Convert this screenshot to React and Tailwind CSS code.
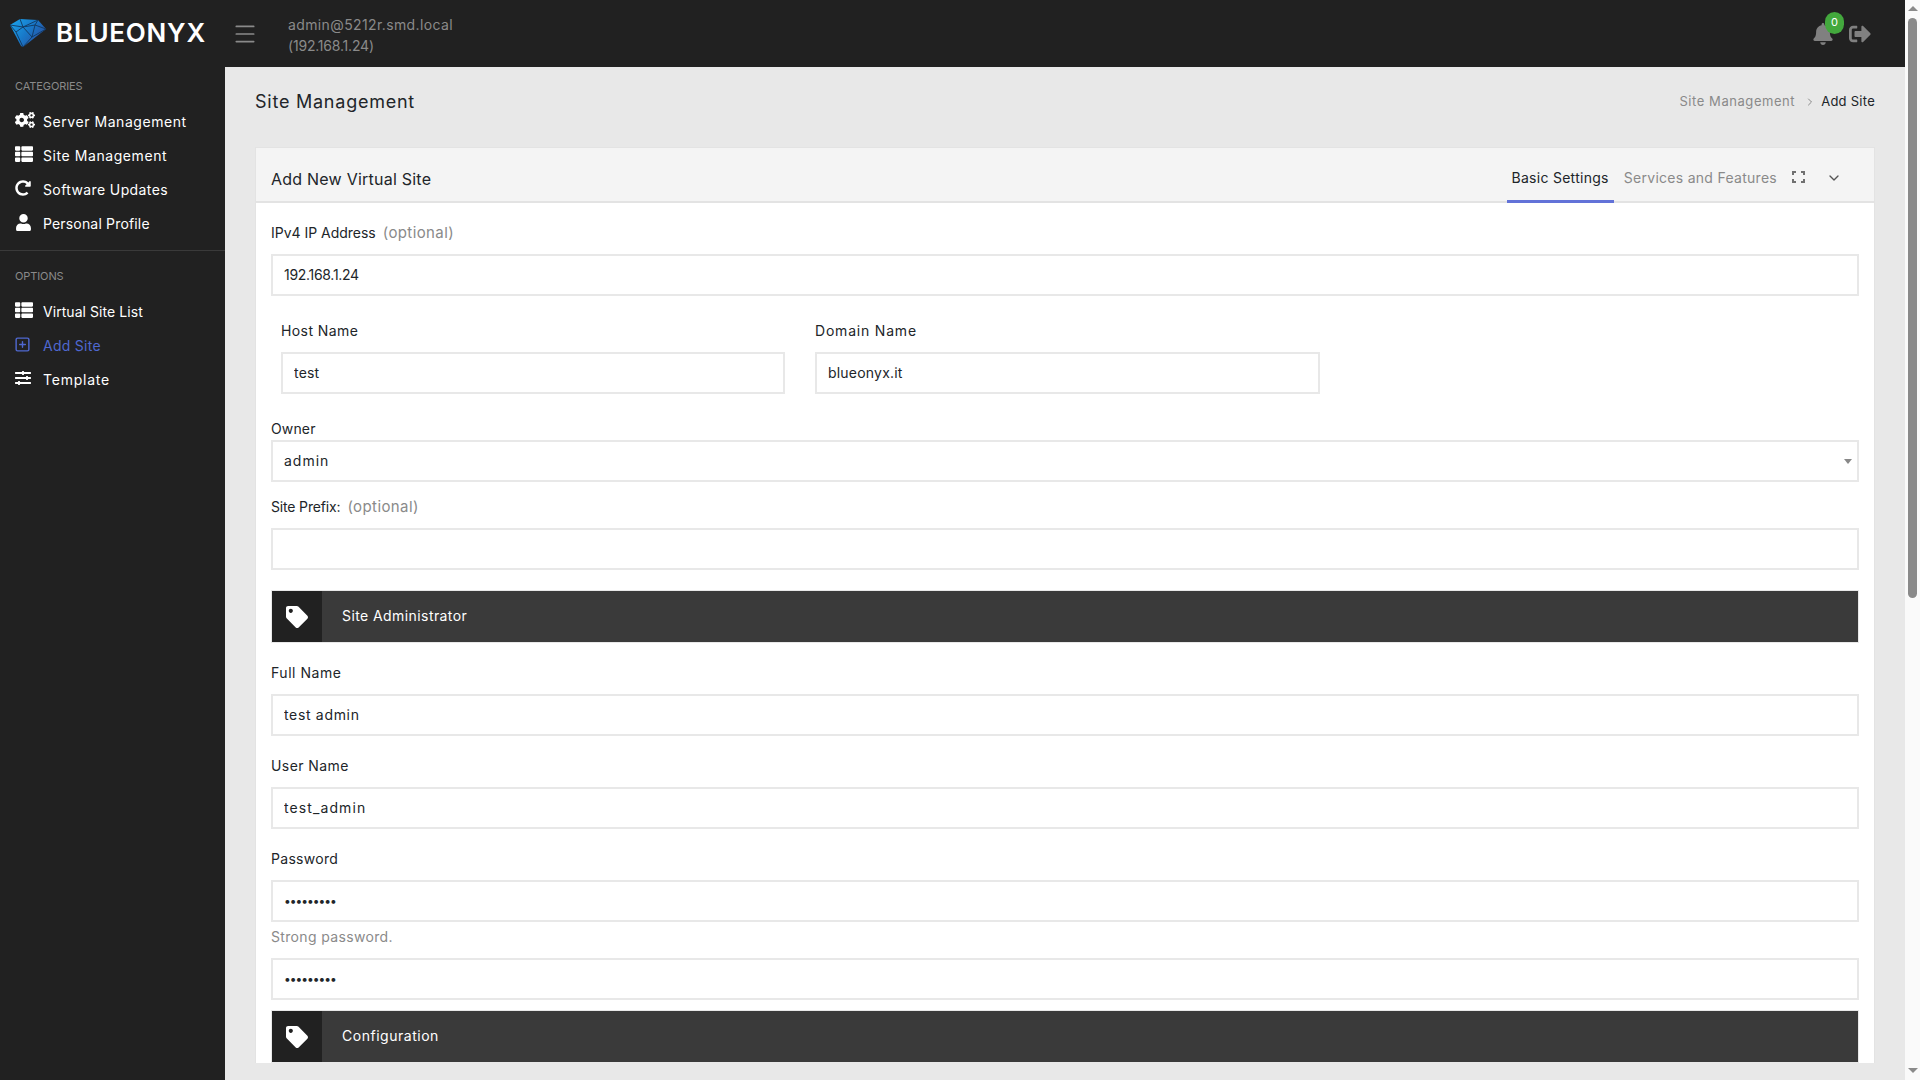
import { Menu, ChevronDown, ChevronRight } from 'lucide-react';
import { FaCogs, FaThList, FaRedoAlt, FaUser, FaSlidersH, FaTag, FaBell, FaSignOutAlt } from 'react-icons/fa';
import { FiPlusSquare } from 'react-icons/fi';

const font = { fontFamily: 'Inter, "Liberation Sans", sans-serif' };

const Diamond = () => (
  <svg width="38" height="30" viewBox="0 0 38 30">
    <defs>
      <linearGradient id="gem" x1="0" y1="0" x2="1" y2="0.6">
        <stop offset="0" stopColor="#1ba8ee" />
        <stop offset="0.55" stopColor="#1878c8" />
        <stop offset="1" stopColor="#2a4fa0" />
      </linearGradient>
    </defs>
    <path d="M1 7 L11 1 L29 2 L37 11 L14 29 L12 28 Z" fill="url(#gem)" />
    <path d="M1 7 L14 9 L11 1 M14 9 L29 2 M14 9 L23 19 L14 29 L7 14 L1 7 M14 9 L7 14 M23 19 L37 11 L26 7 L14 9 M26 7 L29 2 M26 7 L23 19" fill="none" stroke="#12385f" strokeWidth="0.9" />
  </svg>
);

const NavItem = ({ icon: Icon, label, active, size = 18, className = '' }) => (
  <div className={`h-[34px] pl-[15px] pb-[2px] flex items-center text-[14px] ${className} ${active ? 'text-[#4f68d0]' : 'text-white'}`}>
    <span className="w-[28px] shrink-0 -mt-[2px]">
      <Icon size={size} className={active ? '-ml-[1px]' : ''} />
    </span>
    {label}
  </div>
);

const Label = ({ children, hint, className = '' }) => (
  <div className={`text-[14px] leading-[20px] text-[#212529] ${className}`}>
    {children}
    {hint && <span className="text-[15px] tracking-[0.4px] text-[#8a8a8a] ml-[7px]">{hint}</span>}
  </div>
);

const Field = ({ value = '', type = 'text', className = '' }) => (
  <input
    type={type}
    readOnly
    value={value}
    className={`block w-full h-[42px] px-[11px] pb-[2px] border-2 border-[#e8e8e8] bg-white text-[#212529] outline-none ${type === 'password' ? 'text-[12px] tracking-[-1px]' : 'text-[14px]'} ${className}`}
    style={font}
  />
);

const SectionBar = ({ children, className = '' }) => (
  <div className={`h-[53px] flex items-center bg-[#3a3a3a] border border-[#e8e8e8] text-white text-[14px] ${className}`}>
    <div className="w-[50px] h-full bg-[#212121] flex items-center justify-center shrink-0">
      <FaTag size={22} />
    </div>
    <span className="ml-5 pb-[3px]">{children}</span>
  </div>
);

const App = () => {
  return (
    <div className="h-screen flex overflow-hidden bg-[#fafafa]" style={font}>
      <div className="flex-1 min-w-0 flex flex-col">
        {/* Top bar */}
        <header className="h-[67px] shrink-0 bg-[#212121] flex items-center">
          <div className="w-[225px] shrink-0 flex items-center pl-[9px] -mt-[1px]">
            <Diamond />
            <span className="ml-[9px] text-white text-[26px] font-semibold tracking-[0.03em] leading-none">BLUEONYX</span>
          </div>
          <Menu size={26} strokeWidth={1.6} className="ml-[7px] text-[#8a8a8a]" />
          <div className="ml-[30px] pt-[3px] text-[14px] leading-[21px] text-[#8a8a8a]">
            <div className="tracking-[0.38px]">admin@5212r.smd.local</div>
            <div className="tracking-[-0.2px]">(192.168.1.24)</div>
          </div>
          <div className="ml-auto flex items-center pr-[34px] text-[#808080]">
            <div className="relative">
              <FaBell size={22} />
              <span className="absolute -top-[11px] left-[13px] w-[19px] h-[22px] rounded-full bg-[#43a83d] text-white text-[11px] flex items-center justify-center">0</span>
            </div>
            <FaSignOutAlt size={22} className="ml-[15px]" />
          </div>
        </header>

        <div className="flex-1 min-h-0 flex">
          {/* Sidebar */}
          <aside className="w-[225px] shrink-0 bg-[#212121]">
            <div className="pt-[11px] pb-[9px] border-b border-[#3a3a3a]">
              <div className="pl-[15px] text-[11px] leading-[16px] tracking-[-0.1px] text-[#8a8a8a] mb-[11px]">CATEGORIES</div>
              <NavItem icon={FaCogs} label="Server Management" size={20} className="tracking-[0.55px]" />
              <NavItem icon={FaThList} label="Site Management" className="tracking-[0.57px]" />
              <NavItem icon={FaRedoAlt} label="Software Updates" size={16} className="tracking-[0.39px]" />
              <NavItem icon={FaUser} label="Personal Profile" size={17} className="tracking-[0.17px]" />
            </div>
            <div className="pt-[17px]">
              <div className="pl-[15px] text-[11px] leading-[16px] tracking-[-0.1px] text-[#8a8a8a] mb-[11px]">OPTIONS</div>
              <NavItem icon={FaThList} label="Virtual Site List" className="tracking-[0.06px]" />
              <NavItem icon={FiPlusSquare} label="Add Site" active size={17} className="tracking-[0.28px]" />
              <NavItem icon={FaSlidersH} label="Template" size={16} className="tracking-[0.78px]" />
            </div>
          </aside>

          {/* Main */}
          <main className="flex-1 min-w-0 bg-[#e8e8e8] px-[30px] overflow-hidden">
            <div className="h-[80px] flex items-center justify-between pb-[11px]">
              <h1 className="text-[18px] text-[#212529] tracking-[0.76px]">Site Management</h1>
              <div className="flex items-center text-[13px] tracking-[0.56px] text-[#8a8a8a]">
                Site Management
                <ChevronRight size={12} className="ml-[9px] mr-[5px]" />
                <span className="text-[#212529] tracking-[0.26px]">Add Site</span>
              </div>
            </div>

            <div className="bg-white border border-[#e3e3e3] border-b-0">
              <div className="h-[55px] bg-[#f4f4f4] border-b-2 border-[#e3e3e3] flex items-center pl-[15px]">
                <h2 className="pt-[9px] text-[16px] text-[#212529] tracking-[0.23px]">Add New Virtual Site</h2>
                <div className="ml-auto flex items-stretch h-full text-[14px] tracking-[0.02em]">
                  <div className="px-[5px] pt-[7px] flex items-center text-[#212529] border-b-[3px] border-[#6272d8] -mb-[2px]">Basic Settings</div>
                  <div className="ml-[10px] pt-[6px] flex items-center text-[#8a8a8a]">Services and Features</div>
                  <div className="ml-[15px] pt-[5px] flex items-center">
                    <svg width="13" height="12" viewBox="0 0 13 12" fill="none" stroke="#707070" strokeWidth="2">
                      <path d="M1 4V1H4M9 1H12V4M12 8V11H9M4 11H1V8" />
                    </svg>
                  </div>
                  <div className="ml-[21px] mr-[32px] pt-[7px] flex items-center text-[#555]">
                    <ChevronDown size={16} />
                  </div>
                </div>
              </div>

              <div className="px-[15px]">
                <div className="pt-[20px]">
                  <Label hint="(optional)" className="tracking-[-0.02px]">IPv4 IP Address</Label>
                  <div className="mt-[11px]"><Field value="192.168.1.24" className="tracking-[-0.3px]" /></div>
                </div>

                <div className="mt-[25px] pl-[10px] flex gap-[30px]">
                  <div className="w-[504px]">
                    <Label className="tracking-[0.41px]">Host Name</Label>
                    <div className="mt-[11px]"><Field value="test" className="tracking-[0.2px]" /></div>
                  </div>
                  <div className="w-[505px]">
                    <Label className="tracking-[0.8px]">Domain Name</Label>
                    <div className="mt-[11px]"><Field value="blueonyx.it" className="tracking-[0.2px]" /></div>
                  </div>
                </div>

                <div className="mt-[25px]">
                  <Label className="tracking-[0.14px]">Owner</Label>
                  <div className="relative mt-[1px]">
                    <Field value="admin" className="tracking-[1px]" />
                    <span className="absolute right-[7px] top-[19px] w-0 h-0 border-l-[4px] border-r-[4px] border-t-[5px] border-l-transparent border-r-transparent border-t-[#888]" />
                  </div>
                </div>

                <div className="mt-[15px]">
                  <Label hint="(optional)" className="tracking-[-0.16px]">Site Prefix:</Label>
                  <div className="mt-[11px]"><Field /></div>
                </div>

                <div className="mt-[20px]"><SectionBar className="tracking-[0.42px]">Site Administrator</SectionBar></div>

                <div className="mt-[20px]">
                  <Label className="tracking-[0.54px]">Full Name</Label>
                  <div className="mt-[11px]"><Field value="test admin" className="tracking-[0.67px]" /></div>
                </div>
                <div className="mt-[20px]">
                  <Label className="tracking-[0.41px]">User Name</Label>
                  <div className="mt-[11px]"><Field value="test_admin" className="tracking-[1.1px]" /></div>
                </div>
                <div className="mt-[20px]">
                  <Label className="tracking-[0.29px]">Password</Label>
                  <div className="mt-[11px]"><Field type="password" value="123456789" /></div>
                </div>
                <div className="mt-[5px] text-[14px] leading-[20px] text-[#8a8a8a] tracking-[0.34px]">Strong password.</div>
                <div className="mt-[11px]"><Field type="password" value="123456789" /></div>

                <div className="mt-[10px]"><SectionBar className="tracking-[0.52px]">Configuration</SectionBar></div>
              </div>
            </div>
          </main>
        </div>
      </div>

      {/* Scrollbar */}
      <div className="w-[15px] shrink-0 bg-[#fafafa] flex flex-col items-center">
        <span className="mt-[6px] w-0 h-0 border-l-[5px] border-r-[5px] border-b-[5px] border-l-transparent border-r-transparent border-b-[#8a8a8a]" />
        <div className="mt-[7px] w-[9px] h-[580px] rounded-full bg-[#8a8a8a]" />
        <span className="mt-auto mb-[7px] w-0 h-0 border-l-[5px] border-r-[5px] border-t-[5px] border-l-transparent border-r-transparent border-t-[#8a8a8a]" />
      </div>
    </div>
  );
};

export default App;
